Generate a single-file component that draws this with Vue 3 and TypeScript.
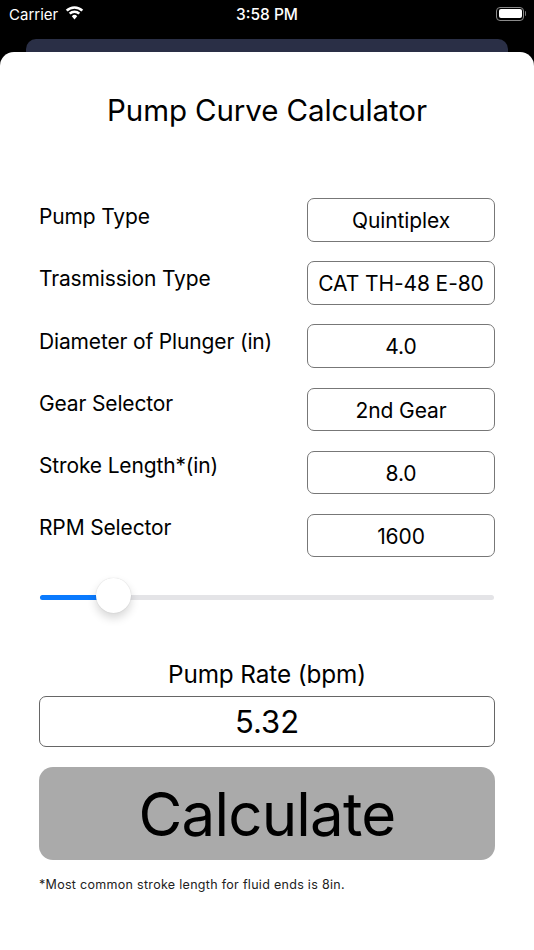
<script setup lang="ts">
const labels = [
  'Pump Type',
  'Trasmission Type',
  'Diameter of Plunger (in)',
  'Gear Selector',
  'Stroke Length*(in)',
  'RPM Selector',
]
const values = ['Quintiplex', 'CAT TH-48 E-80', '4.0', '2nd Gear', '8.0', '1600']
</script>

<template>
  <div class="screen">
    <header class="status">
      <div class="status-left">
        <span>Carrier</span>
        <svg class="wifi" width="19" height="15" viewBox="0 0 18 15" aria-hidden="true">
          <path d="M1.2 5.7a11 11 0 0 1 15.600 0" fill="none" stroke="#fff" stroke-width="2.600"/>
          <path d="M4.200 8.700a6.800 6.800 0 0 1 9.600 0" fill="none" stroke="#fff" stroke-width="2.600"/>
          <path d="M9 14.500L6.300 11.200a3.800 3.800 0 0 1 5.400 0z" fill="#fff"/>
        </svg>
      </div>
      <span class="clock">3:58 PM</span>
      <div class="battery"><i></i></div>
    </header>
    <div class="backcard"></div>
    <main class="sheet">
      <h1>Pump Curve Calculator</h1>
      <section class="form">
        <div class="labels">
          <span v-for="label in labels" :key="label" class="label">{{ label }}</span>
        </div>
        <div class="fields">
          <div v-for="value in values" :key="value" class="field">{{ value }}</div>
        </div>
      </section>
      <div class="slider">
        <div class="fill"></div>
        <div class="thumb"></div>
      </div>
      <div class="rate-label">Pump Rate (bpm)</div>
      <div class="rate">5.32</div>
      <button class="calc" type="button">Calculate</button>
      <p class="note">*Most common stroke length for fluid ends is 8in.</p>
    </main>
  </div>
</template>

<style>
html, body { margin: 0; background: #000; }
</style>

<style scoped>
.screen {
  width: 534px;
  height: 950px;
  background: #000;
  overflow: hidden;
  font-family: Inter, "Liberation Sans", sans-serif;
  color: #000;
  display: flex;
  flex-direction: column;
}
.status {
  height: 28px;
  flex: none;
  padding: 0 22px 0 9px;
  display: flex;
  align-items: center;
  justify-content: space-between;
  position: relative;
  color: #fff;
  font-size: 15px;
}
.status-left { display: flex; align-items: center; gap: 7px; }
.wifi { margin-top: -3px; }
.clock {
  position: absolute;
  left: 0;
  right: 0;
  text-align: center;
  font-size: 15.500px;
  font-weight: 500;
}
.battery {
  width: 28px;
  height: 14px;
  border: 1px solid #8a8a8a;
  border-radius: 4px;
  padding: 1.500px;
  box-sizing: border-box;
  margin: -1px -12px 0 0;
  position: relative;
}
.battery i { display: block; height: 100%; background: #fff; border-radius: 2px; }
.battery::after {
  content: "";
  position: absolute;
  right: -3px;
  top: 3.500px;
  width: 1.500px;
  height: 5px;
  background: #777;
  border-radius: 0 1px 1px 0;
}
.backcard {
  height: 13px;
  flex: none;
  margin: 11px 26px 0;
  background: #2a2f46;
  border-radius: 10px 10px 0 0;
}
.sheet {
  flex: 1;
  background: #fff;
  border-radius: 14px 14px 0 0;
  padding: 0 39px;
  display: flex;
  flex-direction: column;
}
h1 {
  margin: 38px 0 0;
  height: 40px;
  line-height: 40px;
  font-size: 29.500px;
  font-weight: 400;
  text-align: center;
  letter-spacing: -0.100px;
}
.form {
  margin-top: 68px;
  display: flex;
  justify-content: space-between;
}
.labels {
  display: flex;
  flex-direction: column;
  gap: 36.300px;
}
.label {
  height: 26px;
  font-size: 21px;
  line-height: 38px;
  letter-spacing: -0.150px;
  white-space: nowrap;
}
.fields {
  display: flex;
  flex-direction: column;
  gap: 19.700px;
}
.field {
  width: 188px;
  height: 43.500px;
  box-sizing: border-box;
  border: 1px solid #777;
  border-radius: 7px;
  font-size: 21px;
  line-height: 43px;
  text-align: center;
  letter-spacing: -0.100px;
  white-space: nowrap;
}
.slider {
  margin: 38px 1px 0;
  height: 5px;
  border-radius: 3px;
  background: #e4e4e7;
  position: relative;
}
.fill {
  width: 60px;
  height: 100%;
  background: #0a7afe;
  border-radius: 3px 0 0 3px;
}
.thumb {
  position: absolute;
  left: 56px;
  top: -17px;
  width: 35px;
  height: 35px;
  border-radius: 50%;
  background: #fff;
  box-shadow: 0 5px 10px rgba(0, 0, 0, 0.16), 0 0 1px rgba(0, 0, 0, 0.2);
}
.rate-label {
  margin-top: 59px;
  height: 30px;
  line-height: 30px;
  text-align: center;
  font-size: 24.300px;
  letter-spacing: -0.100px;
}
.rate {
  margin-top: 7px;
  height: 51px;
  box-sizing: border-box;
  border: 1px solid #666;
  border-radius: 7px;
  font-size: 31px;
  line-height: 49px;
  text-align: center;
}
.calc {
  margin-top: 20px;
  height: 93px;
  padding: 0;
  border: none;
  border-radius: 14px;
  background: #aaa;
  color: #000;
  font-family: inherit;
  font-size: 60px;
  letter-spacing: -0.800px;
}
.note {
  margin: 16px 0 0;
  font-size: 12.500px;
  line-height: 18px;
  letter-spacing: 0.300px;
  color: #222;
}
</style>
